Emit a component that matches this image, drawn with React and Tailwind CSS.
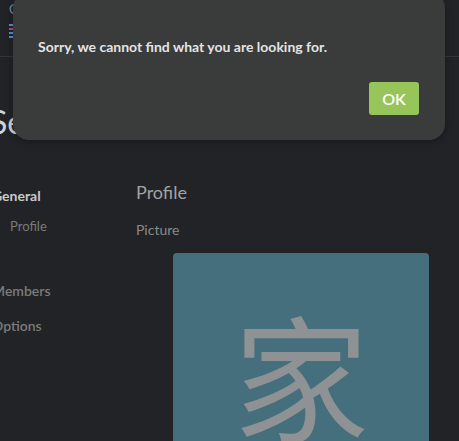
import React from 'react';

const lato = { fontFamily: 'Lato, "Noto Sans", "Noto Sans CJK SC", sans-serif' };

const App = () => {
  return (
    <div className="relative w-full h-[441px] overflow-hidden bg-[#222327]" style={lato}>
      {/* Top bar (mostly under the dialog) */}
      <div className="h-[57px] border-b border-[#33353a] pl-[9px] pt-[1px]">
        <div className="text-[13px] leading-[16px] text-[#6c8fa8]">C</div>
        <div className="mt-[7px] flex flex-col gap-[2px] w-[5px]">
          <span className="h-[2px] bg-[#5b8fd0]" />
          <span className="h-[2px] bg-[#b04a8f]" />
          <span className="h-[2px] bg-[#5b8fd0]" />
          <span className="h-[2px] bg-[#5b8fd0]" />
        </div>
      </div>

      {/* Settings page */}
      <div className="-ml-[10px]">
        <h1 className="mt-[45px] text-[32px] leading-[40px] text-[#cdd5dc] font-normal">Settings</h1>

        <div className="flex mt-[44px]">
          {/* Sidebar */}
          <div className="w-[146px] shrink-0 pl-[2px]">
            <div className="text-[14px] leading-[20px] font-bold text-[#c9c9c9]">General</div>
            <div className="mt-[10px] pl-[18px] text-[13px] leading-[20px] text-[#7a7a7a]">Profile</div>
            <div className="mt-[45px] text-[14px] leading-[20px] font-semibold text-[#7b7b7b]">Members</div>
            <div className="mt-[15px] text-[14px] leading-[20px] font-semibold text-[#7b7b7b]">Options</div>
          </div>

          {/* Content */}
          <div className="flex-1 -mt-[6px]">
            <h2 className="text-[18px] leading-[24px] text-[#a3a3a3] font-normal">Profile</h2>
            <div className="mt-[16px] text-[14px] leading-[20px] text-[#8a8a8a]">Picture</div>
            <div className="mt-[13px] ml-[37px] w-[256px] h-[256px] rounded-[4px] bg-[#456f7c] flex items-center justify-center pb-[16px]">
              <span className="text-[136px] leading-none text-[#8f9294]" style={{ fontFamily: '"Noto Sans CJK SC", sans-serif' }}>家</span>
            </div>
          </div>
        </div>
      </div>

      {/* Alert dialog */}
      <div className="absolute left-[13px] top-[-8px] w-[432px] h-[148px] rounded-[16px] bg-[#3a3b3b] shadow-[0_2px_8px_rgba(0,0,0,0.3)] pl-[25px] pr-[26px] pt-[45px]">
        <p className="text-[14px] leading-[20px] font-bold text-[#e4e4e4]">Sorry, we cannot find what you are looking for.</p>
        <div className="mt-[25px] flex justify-end">
          <button className="w-[50px] h-[33px] rounded-[3px] bg-[#97c55a] text-white text-[16px] font-semibold">OK</button>
        </div>
      </div>
    </div>
  );
};

export default App;
